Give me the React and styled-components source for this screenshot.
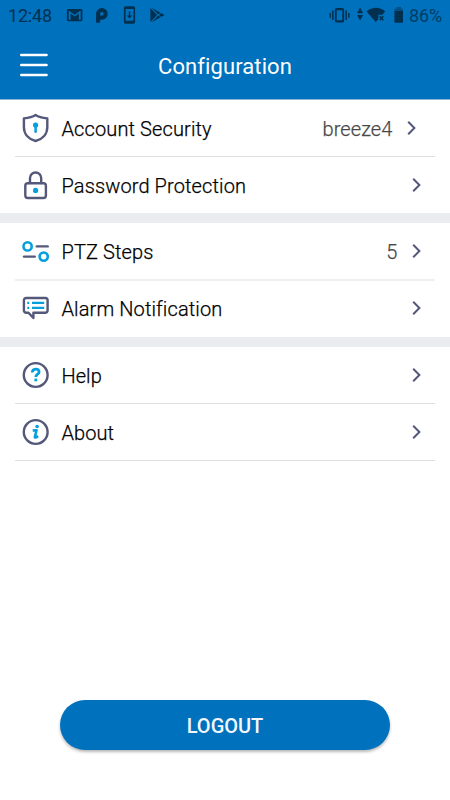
import React from "react";
import styled, { createGlobalStyle } from "styled-components";

const GlobalStyle = createGlobalStyle`
  * { box-sizing: border-box; }
  body { margin: 0; background: #fff; }
`;

const BLUE = "#0071bc";
const NAVY = "#00304f";
const SLATE = "#54587a";
const CYAN = "#069fdc";

const Screen = styled.main`
  width: 450px;
  height: 800px;
  display: flex;
  flex-direction: column;
  background: #fff;
  font-family: Roboto, sans-serif;
  overflow: hidden;
`;

const Header = styled.header`
  height: 99px;
  flex: none;
  background: ${BLUE};
  box-shadow: 0 1px 0 #92b2d6;
`;

const StatusBar = styled.div`
  height: 32px;
  display: flex;
  justify-content: space-between;
  color: ${NAVY};
  font-size: 18px;
  line-height: 32px;
`;

const StatusGroup = styled.div`
  display: flex;
`;

const Clock = styled.span`
  width: 60px;
  padding-left: 8px;
  letter-spacing: -0.2px;
`;

const Battery = styled.span`
  width: 41px;
  letter-spacing: -0.1px;
  opacity: 0.8;
`;

const TitleBar = styled.div`
  height: 67px;
  display: grid;
  grid-template-columns: 68px 1fr 68px;
  align-items: center;
`;

const MenuButton = styled.button`
  display: flex;
  padding: 0 0 1px 20px;
  border: 0;
  background: none;
`;

const Title = styled.h1`
  margin: 0;
  padding: 2px 0 0;
  text-align: center;
  color: #fff;
  font-size: 22px;
  font-weight: 400;
  letter-spacing: ${(p) => p.$spacing}px;
`;

const Group = styled.section`
  border-bottom: ${(p) => (p.$last ? "0" : "10px solid #e9edf0")};
`;

const Row = styled.div`
  height: ${(p) => p.$height}px;
  margin-left: 15px;
  margin-right: 15px;
  padding: 0 ${(p) => p.$inset}px ${(p) => p.$lift || 0}px 5px;
  display: flex;
  align-items: center;
  border-bottom: ${(p) => p.$line || "0"};
`;

const Label = styled.span`
  flex: 1;
  padding: 2px 0 0 11.5px;
  color: #000;
  font-size: 20px;
  font-weight: 300;
  line-height: 24px;
  letter-spacing: ${(p) => p.$spacing || 0}px;
  -webkit-text-stroke: 0.25px currentColor;
`;

const Value = styled.span`
  padding-top: 2px;
  margin-right: 14.5px;
  color: #484848;
  font-size: 20px;
  font-weight: 300;
  line-height: 24px;
  letter-spacing: 0.1px;
  -webkit-text-stroke: 0.25px currentColor;
`;

const Icon = styled.svg`
  display: block;
  flex: none;
`;

const Footer = styled.footer`
  margin-top: auto;
  padding: 0 60px 50px;
`;

const LogoutButton = styled.button`
  display: block;
  width: 330px;
  height: 50px;
  border: 0;
  border-radius: 25px;
  padding: 2px 0 0;
  background: ${BLUE};
  color: #f4f7fc;
  font: 500 20px Roboto, sans-serif;
  box-shadow: 0 2px 3px rgba(0, 0, 0, 0.28);
`;

const Glyph = ({ children }) => (
  <Icon width="30" height="30" viewBox="0 0 30 30" fill="none" stroke={SLATE} strokeWidth="2.4" strokeLinecap="round" strokeLinejoin="round">
    {children}
  </Icon>
);

const MenuIcon = () => (
  <Icon width="28" height="24" viewBox="0 0 28 24" stroke="#fff" strokeWidth="2.4" strokeLinecap="round">
    <path d="M1.2 2 H26.6 M1.2 12 H26.6 M1.2 22 H26.6" />
  </Icon>
);

const ShieldIcon = () => (
  <Glyph>
    <path d="M15.6 2 C12 4.4 8 5 3.9 5.4 V14 C3.9 21 8.5 26.2 15.6 28 C22.7 26.2 27.3 21 27.3 14 V5.4 C23 5 19 4.4 15.6 2Z" />
    <circle cx="15.6" cy="12.1" r="2.6" fill={CYAN} stroke="none" />
    <path d="M15.6 12.5 V18.7" stroke={CYAN} strokeWidth="2.5" />
  </Glyph>
);

const LockIcon = () => (
  <Glyph>
    <rect x="5.3" y="13.2" width="20.6" height="14.8" rx="2.5" />
    <path d="M10 13 V8.1 A5.6 5.6 0 0 1 21.2 8.1 V13" />
    <circle cx="15.6" cy="20.4" r="2.6" fill={CYAN} stroke="none" />
  </Glyph>
);

const StepsIcon = () => (
  <Glyph>
    <circle cx="7.6" cy="10.4" r="4.1" stroke={CYAN} strokeWidth="2.6" />
    <path d="M16.8 10.4 H27.7" />
    <path d="M4 20.6 H14.8" />
    <circle cx="23.7" cy="20.6" r="4.1" stroke={CYAN} strokeWidth="2.6" />
  </Glyph>
);

const AlarmIcon = () => (
  <Glyph>
    <path d="M6.2 5 H25.3 A2.3 2.3 0 0 1 27.6 7.3 V17.5 A2.3 2.3 0 0 1 25.3 19.8 H13.4 V25 L8.5 19.8 H6.2 A2.3 2.3 0 0 1 3.9 17.5 V7.3 A2.3 2.3 0 0 1 6.2 5Z" />
    <path d="M7.3 9.9 H9.2 M12 9.9 H24.2 M7.3 14.9 H9.2 M12 14.9 H24.2" stroke={CYAN} strokeWidth="2.3" strokeLinecap="butt" />
  </Glyph>
);

const HelpIcon = () => (
  <Glyph>
    <circle cx="15.7" cy="15" r="11.9" />
    <path d="M12.3 12.5 C12.4 8 19.1 8 19.1 11.9 C19.1 14.3 15.8 14.2 15.8 17.1" stroke={CYAN} strokeWidth="2.8" strokeLinecap="butt" />
    <path d="M14.4 18.6 H17.2 V21.3 H14.4Z" fill={CYAN} stroke="none" />
  </Glyph>
);

const AboutIcon = () => (
  <Glyph>
    <circle cx="15.7" cy="15" r="11.9" />
    <circle cx="17.1" cy="9.5" r="1.8" fill={CYAN} stroke="none" />
    <path d="M12.7 13.6 L16.6 13.2 L14.8 19.8 C14.5 21 16.3 20.7 18 19" stroke={CYAN} strokeWidth="2.5" strokeLinecap="butt" />
  </Glyph>
);

const Chevron = () => (
  <Icon width="9" height="16" viewBox="0 0 9 16" fill="none" stroke={SLATE} strokeWidth="2">
    <path d="M1.2 1.7 L7.4 8 L1.2 14.3" />
  </Icon>
);

const NotificationIcons = () => (
  <Icon width="110" height="32" viewBox="60 0 110 32" fill={NAVY}>
    <path fillRule="evenodd" d="M68.3 9 H81 A1.4 1.4 0 0 1 82.4 10.4 V19.8 A1.4 1.4 0 0 1 81 21.2 H68.3 A1.4 1.4 0 0 1 66.9 19.8 V10.4 A1.4 1.4 0 0 1 68.3 9Z M68.7 10.5 V19.7 H70.6 V13.5 L74.7 16.5 L78.8 13.5 V19.7 H80.7 V10.5 L74.7 14.8Z" />
    <path d="M98.1 22.8 V13.8 A3.8 3.8 0 1 1 101.9 17.6 H99.6" fill="none" stroke={NAVY} strokeWidth="4.1" />
    <path fillRule="evenodd" d="M125.7 6.2 H133.3 A1.8 1.8 0 0 1 135.1 8 V21.9 A1.8 1.8 0 0 1 133.3 23.7 H125.7 A1.8 1.8 0 0 1 123.9 21.9 V8 A1.8 1.8 0 0 1 125.7 6.2Z M125.6 9 V20.7 H133.4 V9Z" />
    <path d="M128.8 11.5 H130.2 V15.4 H132.4 L129.5 18.4 L126.6 15.4 H128.8Z" />
    <path d="M150.4 8.1 L157 15 L150.4 21.9Z M151.7 7.8 L160.5 12.8 L158.3 14.6Z M151.7 22.2 L160.5 17.2 L158.3 15.4Z M161.2 13.1 L164.5 15 L161.2 16.9 L159.1 15Z" />
  </Icon>
);

const SystemIcons = () => (
  <Icon width="82" height="32" viewBox="327.5 0 82 32" fill={NAVY}>
    <path fillRule="evenodd" d="M337 8 H343 A1.6 1.6 0 0 1 344.6 9.6 V20.9 A1.6 1.6 0 0 1 343 22.5 H337 A1.6 1.6 0 0 1 335.4 20.9 V9.6 A1.6 1.6 0 0 1 337 8Z M337.2 10.2 V20.3 H342.8 V10.2Z" />
    <path d="M332.6 10.5 H334.1 V20 H332.6Z M330 13 H331.4 V17.8 H330Z M345.9 10.5 H347.4 V20 H345.9Z M348.6 13 H350 V17.8 H348.6Z" />
    <path d="M357.6 13.2 L360.6 7.6 L363.6 13.2Z M357.6 14.9 L360.6 20.4 L363.6 14.9Z" />
    <path d="M367 11.4 C372.7 6.6 380.2 6.6 385.7 11.4 L382.8 14.7 H378.8 V19.1 L376.3 22Z" />
    <path d="M380.2 16.2 L383.8 20.2 M383.8 16.2 L380.2 20.2" fill="none" stroke={NAVY} strokeWidth="1.5" />
    <path d="M397 7 H401.5 V9 H397Z M394.9 8.8 H403.5 V11 H394.9Z" opacity=".5" />
    <path d="M394.9 11 H403.5 V21.8 Q403.5 22.7 402.6 22.7 H395.8 Q394.9 22.7 394.9 21.8Z" />
  </Icon>
);

const groups = [
  [
    { icon: ShieldIcon, label: "Account Security", value: "breeze4", height: 58, inset: 19, line: "1px solid #dfdfe0", spacing: 0.12 },
    { icon: LockIcon, label: "Password Protection", height: 56, inset: 14, spacing: 0.12 },
  ],
  [
    { icon: StepsIcon, label: "PTZ Steps", value: "5", height: 58, inset: 14, line: "2px solid #f0f0f0", spacing: 0.12 },
    { icon: AlarmIcon, label: "Alarm Notification", height: 56, inset: 14, lift: 2, spacing: 0.12 },
  ],
  [
    { icon: HelpIcon, label: "Help", height: 57, inset: 14, line: "1px solid #dfdfe0", spacing: 0.05 },
    { icon: AboutIcon, label: "About", height: 57, inset: 14, line: "1px solid #dfdfe0", spacing: 0.05 },
  ],
];

export default function App() {
  return (
    <Screen>
      <GlobalStyle />
      <Header>
        <StatusBar>
          <StatusGroup>
            <Clock>12:48</Clock>
            <NotificationIcons />
          </StatusGroup>
          <StatusGroup>
            <SystemIcons />
            <Battery>86%</Battery>
          </StatusGroup>
        </StatusBar>
        <TitleBar>
          <MenuButton aria-label="Menu">
            <MenuIcon />
          </MenuButton>
          <Title $spacing={0.1}>Configuration</Title>
        </TitleBar>
      </Header>
      {groups.map((rows, i) => (
        <Group key={i} $last={i === groups.length - 1}>
          {rows.map(({ icon: RowIcon, label, value, height, inset, line, lift, spacing }) => (
            <Row key={label} $height={height} $inset={inset} $line={line} $lift={lift}>
              <RowIcon />
              <Label $spacing={spacing}>{label}</Label>
              {value && <Value>{value}</Value>}
              <Chevron />
            </Row>
          ))}
        </Group>
      ))}
      <Footer>
        <LogoutButton>LOGOUT</LogoutButton>
      </Footer>
    </Screen>
  );
}
